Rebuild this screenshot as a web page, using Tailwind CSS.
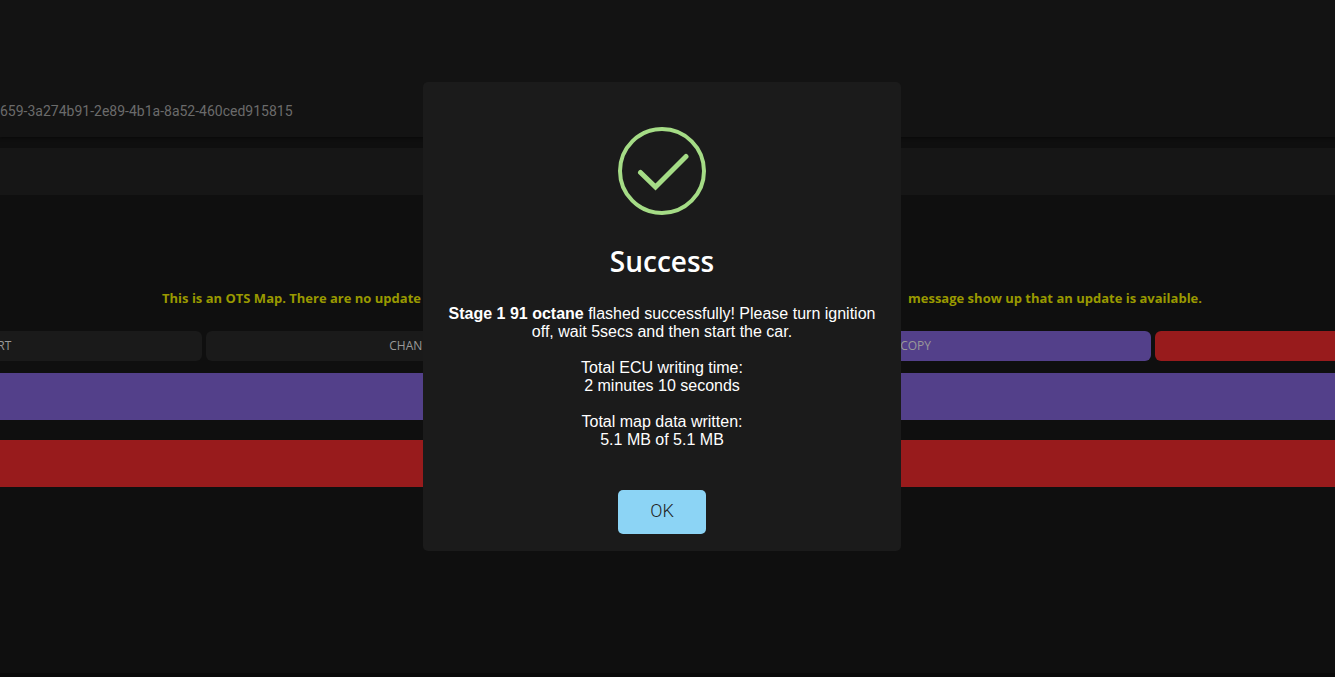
<!DOCTYPE html>
<html lang="en">
<head>
<meta charset="utf-8">
<title>Flash complete</title>
<script src="https://cdn.jsdelivr.net/npm/@tailwindcss/browser@4"></script>
</head>
<body class="min-h-screen overflow-hidden bg-[#0f0f0f] font-['Segoe_UI','Open_Sans',sans-serif]">
<main class="flex min-h-screen flex-col overflow-hidden border-b-4 border-[#0a0a0a]">
  <header class="h-[137px] bg-[#131313] pt-[101px] font-['Roboto',sans-serif] text-sm leading-5 text-[#6b6b6b] shadow-[0_1px_3px_#080808]">659-3a274b91-2e89-4b1a-8a52-460ced915815</header>
  <div class="mt-[11px] h-[47px] bg-[#161616]"></div>
  <p class="mt-[93px] flex justify-between pr-[133px] pl-[162px] text-[13px] leading-5 font-bold text-[#999900]">
    <span>This is an OTS Map. There are no update</span>
    <span>message show up that an update is available.</span>
  </p>
  <div class="mt-[23px] -mr-[290px] -ml-[268px] grid grid-cols-4 gap-1 text-xs font-medium text-[#999]">
    <button class="h-[30px] rounded-md bg-[#1a1a1a] pr-[191px] text-right">RT</button>
    <button class="h-[30px] rounded-md bg-[#1a1a1a] pl-[183px] text-left">CHAN</button>
    <button class="h-[30px] rounded-md bg-[#53408a]">COPY</button>
    <button class="h-[30px] rounded-md bg-[#981b1c]" aria-label="Delete"></button>
  </div>
  <button class="mt-3 h-[47px] bg-[#53408a]" aria-label="Flash map"></button>
  <button class="mt-5 h-[47px] bg-[#981b1c]" aria-label="Remove map"></button>
</main>

<div class="fixed inset-0 flex items-center justify-center pr-[11px] pb-11">
  <section role="dialog" aria-modal="true" aria-labelledby="title" class="flex w-[478px] flex-col items-center rounded-[5px] bg-[#1b1b1b] px-5 pt-11 pb-[17px] text-center text-white">
    <svg class="size-[90px]" viewBox="0 0 90 90" fill="none" stroke="#a5dc86" aria-hidden="true">
      <circle cx="45" cy="45" r="42" stroke-width="4"/>
      <path d="M23.500 46.500 38.500 61 69 30.500" stroke-width="5" stroke-linecap="round"/>
    </svg>
    <h2 id="title" class="mt-[27px] text-[28px] leading-9 font-semibold">Success</h2>
    <div class="mt-[26px] font-['Liberation_Sans',Arial,sans-serif] text-base leading-[18px]">
      <p><b>Stage 1 91 octane</b> flashed successfully! Please turn ignition off, wait 5secs and then start the car.</p>
      <p class="mt-[18px]">Total ECU writing time:<br>2 minutes 10 seconds</p>
      <p class="mt-[18px]">Total map data written:<br>5.1 MB of 5.1 MB</p>
    </div>
    <button class="mt-[41px] h-11 w-[88px] rounded-[5px] bg-[#8cd4f5] pb-0.5 font-['Roboto',sans-serif] text-lg font-light text-[#222]">OK</button>
  </section>
</div>
</body>
</html>
